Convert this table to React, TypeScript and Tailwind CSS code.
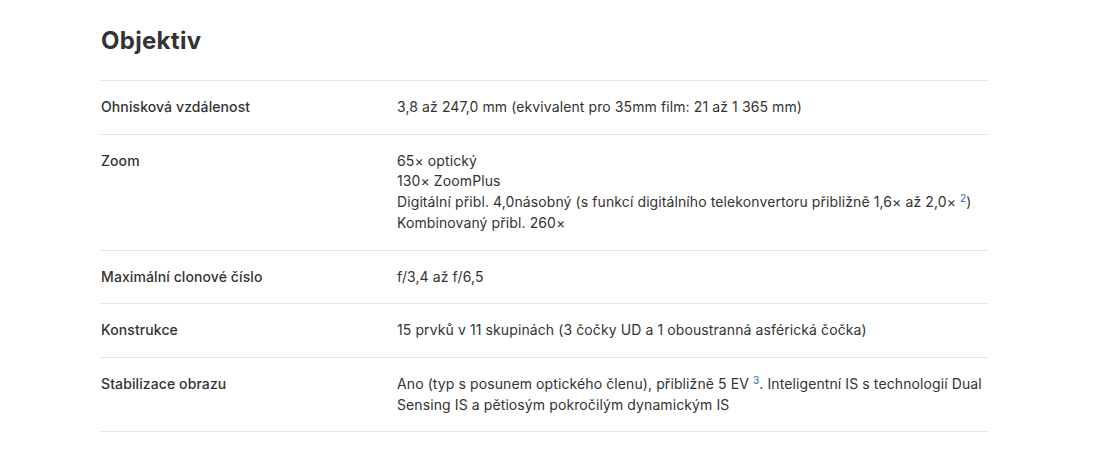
import React from "react";

const Sup = ({ n }: { n: string }) => (
  <span className="relative -top-[5px] text-[10px] leading-none text-[#1a6fc4] ml-[4px]">{n}</span>
);

const rows: { label: string; value: React.ReactNode }[] = [
  {
    label: "Ohnisková vzdálenost",
    value: <p>3,8 až 247,0 mm (ekvivalent pro 35mm film: 21 až 1 365 mm)</p>,
  },
  {
    label: "Zoom",
    value: (
      <>
        <p>65× optický</p>
        <p>130× ZoomPlus</p>
        <p>
          Digitální přibl. 4,0násobný (s funkcí digitálního telekonvertoru přibližně 1,6× až 2,0×
          <Sup n="2" />)
        </p>
        <p>Kombinovaný přibl. 260×</p>
      </>
    ),
  },
  { label: "Maximální clonové číslo", value: <p>f/3,4 až f/6,5</p> },
  {
    label: "Konstrukce",
    value: <p>15 prvků v 11 skupinách (3 čočky UD a 1 oboustranná asférická čočka)</p>,
  },
  {
    label: "Stabilizace obrazu",
    value: (
      <p>
        Ano (typ s posunem optického členu), přibližně 5 EV
        <Sup n="3" />. Inteligentní IS s technologií Dual Sensing IS a pětiosým pokročilým dynamickým IS
      </p>
    ),
  },
];

export default function App() {
  return (
    <div
      className="w-[1100px] h-[450px] bg-white text-[#333333]"
      style={{ fontFamily: "Inter, 'Noto Sans', sans-serif" }}
    >
      <div className="ml-[100px] w-[888px] pt-[26px]">
        <h2 className="text-[24px] font-bold leading-[30px] tracking-[0.3px] pb-[24px] pl-[1px]">Objektiv</h2>
        <div className="border-t border-[#e6e6e6]">
          {rows.map((r) => (
            <div
              key={r.label}
              className="grid grid-cols-[296px_1fr] border-b border-[#e6e6e6] py-4 text-[14px] leading-[20.7px] tracking-[0.1px]"
            >
              <div className="font-medium pl-[1px]">{r.label}</div>
              <div className="pl-[1px]">{r.value}</div>
            </div>
          ))}
        </div>
      </div>
    </div>
  );
}
